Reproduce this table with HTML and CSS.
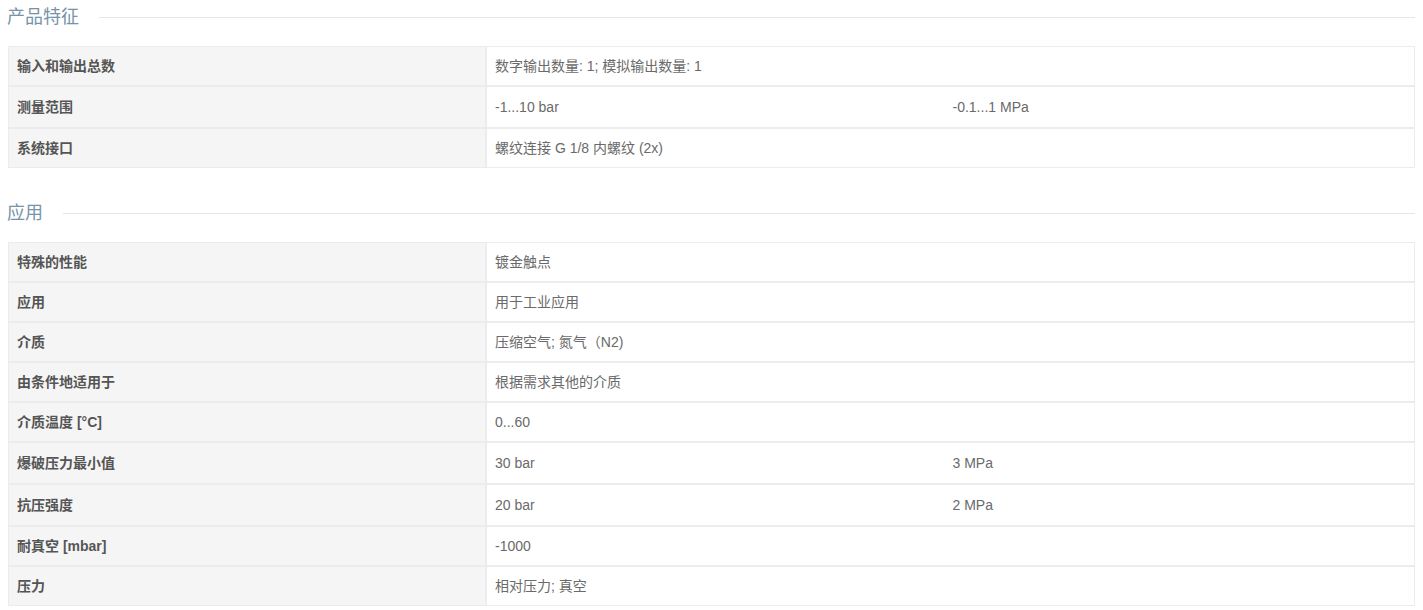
FILE: index.html
```html
<!DOCTYPE html>
<html lang="zh-CN">
<head>
<meta charset="utf-8">
<title>产品特征</title>
<link rel="stylesheet" href="styles.css">
</head>
<body>
<div class="page">
  <section class="section">
    <h2 class="section-title"><span>产品特征</span></h2>
    <table class="spec">
      <tr><td class="label">输入和输出总数</td><td class="value">数字输出数量: 1; 模拟输出数量: 1</td></tr>
      <tr class="dual"><td class="label">测量范围</td><td class="value"><div class="pair"><span>-1...10 bar</span><span>-0.1...1 MPa</span></div></td></tr>
      <tr><td class="label">系统接口</td><td class="value">螺纹连接 G 1/8 内螺纹 (2x)</td></tr>
    </table>
  </section>
  <section class="section">
    <h2 class="section-title"><span>应用</span></h2>
    <table class="spec">
      <tr><td class="label">特殊的性能</td><td class="value">镀金触点</td></tr>
      <tr><td class="label">应用</td><td class="value">用于工业应用</td></tr>
      <tr><td class="label">介质</td><td class="value">压缩空气; 氮气（N2)</td></tr>
      <tr><td class="label">由条件地适用于</td><td class="value">根据需求其他的介质</td></tr>
      <tr><td class="label">介质温度 [°C]</td><td class="value">0...60</td></tr>
      <tr class="dual"><td class="label">爆破压力最小值</td><td class="value"><div class="pair"><span>30 bar</span><span>3 MPa</span></div></td></tr>
      <tr class="dual"><td class="label">抗压强度</td><td class="value"><div class="pair"><span>20 bar</span><span>2 MPa</span></div></td></tr>
      <tr><td class="label">耐真空 [mbar]</td><td class="value">-1000</td></tr>
      <tr><td class="label">压力</td><td class="value">相对压力; 真空</td></tr>
    </table>
  </section>
</div>
</body>
</html>
```
FILE: styles.css
```css
* { box-sizing: border-box; }
html, body { margin: 0; padding: 0; background: #fff; }
body {
  font-family: "Liberation Sans", Arial, "Noto Sans CJK SC", sans-serif;
  font-size: 14px;
  color: #666;
}
.page { padding: 0 8px; }
.section { margin-bottom: 28px; }
.section-title {
  display: flex;
  align-items: center;
  gap: 20px;
  margin: 0 0 12px -1px;
  height: 34px;
  font-size: 18px;
  font-weight: normal;
  color: #7693a7;
  line-height: 34px;
}
.section-title::after {
  content: "";
  flex: 1;
  height: 1px;
  background: #e6e6e6;
}
.spec {
  width: 100%;
  border-collapse: separate;
  border-spacing: 0;
}
.spec td {
  border: 1px solid #ececec;
  padding: 9px 8px;
  line-height: 20px;
  vertical-align: middle;
}
.spec .label {
  width: 478px;
  background: #f5f5f5;
  color: #555;
  font-weight: bold;
}
.spec .value { background: #fff; color: #6a6a6a; }
.spec .dual td { padding-top: 10px; padding-bottom: 10px; }
.pair { display: grid; grid-template-columns: 1fr 1fr; }
.pair span:last-child { padding-left: 2px; }
```
